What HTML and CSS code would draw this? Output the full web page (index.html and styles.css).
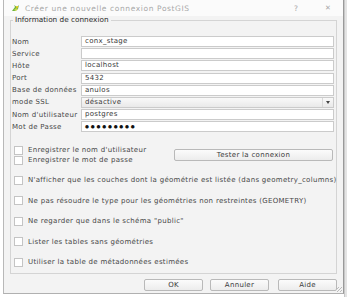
FILE: index.html
```html
<!DOCTYPE html>
<html lang="fr">
	<head>
		<meta charset="UTF-8" />
		<meta name="viewport" content="width=device-width, initial-scale=1.0" />
		<title>Créer une nouvelle connexion PostGIS</title>
		<link rel="stylesheet" href="styles.css">
	</head>
	<body>
		<div class="fenetre">
			<div class="titre">
				<svg class="logo" width="9" height="8" viewBox="0 0 9 8">
					<path d="M1 7 L4 3 L3 1 L6 3 L8 1 L7 5 L4 7 Z" fill="#6db33f" />
					<path d="M3 6 L5 4 L7 5 L5 7 Z" fill="#c8d94a" />
					<circle cx="6" cy="3" r="1" fill="#f2c811" />
				</svg>
				<span class="titre-texte">Créer une nouvelle connexion PostGIS</span>
				<span class="titre-aide">?</span>
				<span class="titre-fermer">✕</span>
			</div>

			<fieldset class="groupe">
				<legend>Information de connexion</legend>
				<div class="champs">
					<label>Nom</label><div class="saisie">conx_stage</div>
					<label>Service</label><div class="saisie"></div>
					<label>Hôte</label><div class="saisie">localhost</div>
					<label>Port</label><div class="saisie">5432</div>
					<label>Base de données</label><div class="saisie">anulos</div>
					<label>mode SSL</label><div class="saisie liste">désactive<span class="fleche"></span></div>
					<label>Nom d'utilisateur</label><div class="saisie">postgres</div>
					<label>Mot de Passe</label><div class="saisie mdp">●●●●●●●●●</div>
				</div>

				<div class="enreg">
					<div class="enreg-liste">
						<div class="ligne"><span class="case"></span>Enregistrer le nom d'utilisateur</div>
						<div class="ligne"><span class="case"></span>Enregistrer le mot de passe</div>
					</div>
					<button type="button" class="bouton tester">Tester la connexion</button>
				</div>

				<div class="options">
					<div class="ligne"><span class="case"></span>N'afficher que les couches dont la géométrie est listée (dans geometry_columns)</div>
					<div class="ligne"><span class="case"></span>Ne pas résoudre le type pour les géométries non restreintes (GEOMETRY)</div>
					<div class="ligne"><span class="case"></span>Ne regarder que dans le schéma "public"</div>
					<div class="ligne"><span class="case"></span>Lister les tables sans géométries</div>
					<div class="ligne"><span class="case"></span>Utiliser la table de métadonnées estimées</div>
				</div>
			</fieldset>

			<div class="boutons">
				<button type="button" class="bouton">OK</button>
				<button type="button" class="bouton">Annuler</button>
				<button type="button" class="bouton">Aide</button>
			</div>
			<div class="poignee"></div>
		</div>
		<div class="bord"></div>
	</body>
</html>
```

FILE: styles.css
```css
body {
	margin: 0;
	padding: 0;
	display: flex;
	background-color: #fff;
	font-family: "DejaVu Sans", sans-serif;
	font-size: 7px;
	letter-spacing: 0.3px;
	color: #474747;
}
.fenetre {
	position: relative;
	width: 339px;
	height: 293px;
	margin-left: 3px;
	background-color: #f3f3f3;
	border-left: 1px solid #b8b8b8;
	border-right: 1px solid #9a9a9a;
	border-bottom: 1px solid #b0b0b0;
	display: flex;
	flex-direction: column;
}
.titre {
	height: 16px;
	display: flex;
	align-items: center;
	padding-left: 7px;
	background-color: #fbfbfb;
	color: #a8a8a8;
	font-size: 7.5px;
	letter-spacing: 0.6px;
}
.logo {
	margin-right: 5px;
}
.titre-texte {
	flex: 1;
}
.titre-aide {
	width: 31px;
}
.titre-fermer {
	width: 18px;
	font-size: 7px;
}
.groupe {
	margin: 0 6px 0 6px;
	padding: 12px 2px 0 1px;
	border: 1px solid #d4d4d4;
	height: 258px;
	box-sizing: border-box;
	min-width: 0;
}
.groupe legend {
	padding: 0 2px;
	margin-left: 1px;
	line-height: 8px;
	color: #2a2a2a;
	font-size: 7.3px;
	letter-spacing: 0;
}
.champs {
	display: grid;
	grid-template-columns: 69px 1fr;
	grid-auto-rows: 11px;
	row-gap: 1.2px;
	align-items: center;
}
.saisie {
	position: relative;
	height: 11px;
	box-sizing: border-box;
	border: 1px solid #cbcbcb;
	background-color: #fff;
	padding-left: 3px;
	line-height: 9px;
	color: #3a3a3a;
}
.liste {
	background: linear-gradient(#f9f9f9, #e9e9e9);
}
.fleche {
	position: absolute;
	right: 0;
	top: 0;
	width: 10px;
	height: 9px;
	border-left: 1px solid #d8d8d8;
}
.fleche::after {
	content: "";
	position: absolute;
	left: 3px;
	top: 3px;
	border-left: 2.5px solid transparent;
	border-right: 2.5px solid transparent;
	border-top: 3px solid #444;
}
.mdp {
	font-size: 4.5px;
	letter-spacing: 1.8px;
	color: #111;
}
.enreg {
	display: flex;
	align-items: center;
	margin-top: 14px;
}
.enreg-liste {
	width: 162px;
	display: flex;
	flex-direction: column;
	gap: 2px;
}
.ligne {
	display: flex;
	align-items: center;
	height: 8px;
	padding-left: 2px;
	white-space: nowrap;
}
.case {
	width: 7px;
	height: 7px;
	border: 1px solid #c4c4c4;
	background-color: #fff;
	margin-right: 5px;
	flex-shrink: 0;
}
.bouton {
	height: 12px;
	padding: 0;
	font-family: "DejaVu Sans", sans-serif;
	font-size: 7px;
	letter-spacing: 0.3px;
	color: #3a3a3a;
	background: linear-gradient(#fbfbfb, #ececec);
	border: 1px solid #b9b9b9;
	border-radius: 2px;
	line-height: 10px;
}
.tester {
	width: 159px;
}
.options {
	display: flex;
	flex-direction: column;
	gap: 12.5px;
	margin-top: 12px;
}
.boutons {
	display: flex;
	justify-content: flex-end;
	gap: 7px;
	padding: 5px 6px 0 0;
}
.boutons .bouton {
	width: 59px;
}
.boutons .bouton:nth-child(3) {
	margin-left: 2px;
}
.poignee {
	position: absolute;
	right: 1px;
	bottom: 1px;
	width: 5px;
	height: 5px;
	background: repeating-linear-gradient(135deg, transparent 0 1px, #bbb 1px 2px);
}
.bord {
	flex: 1;
	height: 297px;
	background-color: #e4e4e4;
	border-left: 1px solid #c8c8c8;
}
```
